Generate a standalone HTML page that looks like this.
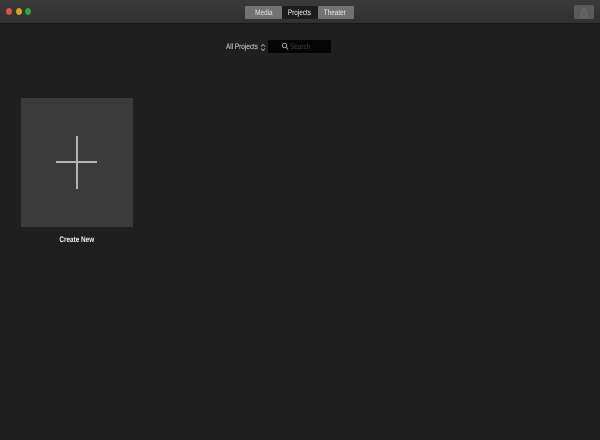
<!DOCTYPE html>
<html><head><meta charset="utf-8"><style>
html,body{margin:0;padding:0;width:600px;height:440px;overflow:hidden;background:#1f1f1f;font-family:"Liberation Sans",sans-serif}
.abs{position:absolute}
#bar{left:0;top:0;width:600px;height:24px;background:linear-gradient(#3a3a3a,#303030);border-bottom:1px solid #181818;box-sizing:border-box}
.dot{width:6px;height:7px;border-radius:50%;top:8px}
.seg{top:6px;height:13px;line-height:13px;text-align:center;font-size:8px;border-radius:1px;box-sizing:border-box}
.t{display:inline-block;transform:scaleX(.8);transform-origin:50% 50%;white-space:nowrap;text-rendering:geometricPrecision;filter:blur(.25px)}
.l{transform-origin:0 50%}
</style></head><body>
<div class="abs" id="bar"></div>
<div class="abs dot" style="left:6px;background:#e0504a"></div>
<div class="abs dot" style="left:16px;background:#d4a325"></div>
<div class="abs dot" style="left:25px;background:#2fa83f"></div>
<div class="abs seg" style="left:245px;width:37px;background:#727272;color:#e6e6e6"><span class="t">Media</span></div>
<div class="abs seg" style="left:282px;width:36px;background:#1c1c1c;color:#f2f2f2"><span class="t" style="margin-left:-2px">Projects</span></div>
<div class="abs seg" style="left:318px;width:36px;background:#727272;color:#ececec"><span class="t" style="margin-left:-2px">Theater</span></div>
<div class="abs" style="left:574px;top:5px;width:20px;height:14px;background:#5a5a5a;border-radius:2px"></div>
<svg class="abs" style="left:574px;top:5px" width="20" height="14" viewBox="0 0 20 14"><path d="M8 6H7.500V12.500H12.500V6H12M10 10V2.500M8.500 4L10 2.500L11.500 4" fill="none" stroke="#6c6c6c" stroke-width="1"/></svg>
<div class="abs" style="left:226px;top:41px;font-size:8px;line-height:12px;color:#dedede;white-space:nowrap"><span class="t l">All Projects</span></div>
<svg class="abs" style="left:260px;top:43px" width="6" height="9" viewBox="0 0 6 9"><path d="M1 3.500L3 1.500L5 3.500M1 5.500L3 7.500L5 5.500" fill="none" stroke="#b5b5b5" stroke-width=".8"/></svg>
<div class="abs" style="left:268px;top:40px;width:63px;height:13px;background:#050505"></div>
<svg class="abs" style="left:281px;top:42px" width="8" height="9" viewBox="0 0 8 9"><circle cx="3.500" cy="3.500" r="2.200" fill="none" stroke="#a5a5a5" stroke-width="1"/><path d="M5 5L7 7.500" stroke="#a5a5a5" stroke-width="1"/></svg>
<div class="abs" style="left:290px;top:41px;font-size:8px;line-height:12px;color:#3d3d3d"><span class="t l">Search</span></div>
<div class="abs" style="left:21px;top:98px;width:111.500px;height:129px;background:#3b3b3b"></div>
<div class="abs" style="left:56px;top:161px;width:41px;height:2px;background:#b3b3b3"></div>
<div class="abs" style="left:76px;top:136px;width:2px;height:53px;background:#b3b3b3"></div>
<div class="abs" style="left:21px;top:234px;width:112px;text-align:center;font-size:8px;line-height:12px;font-weight:bold;color:#efefef"><span class="t">Create New</span></div>
</body></html>
